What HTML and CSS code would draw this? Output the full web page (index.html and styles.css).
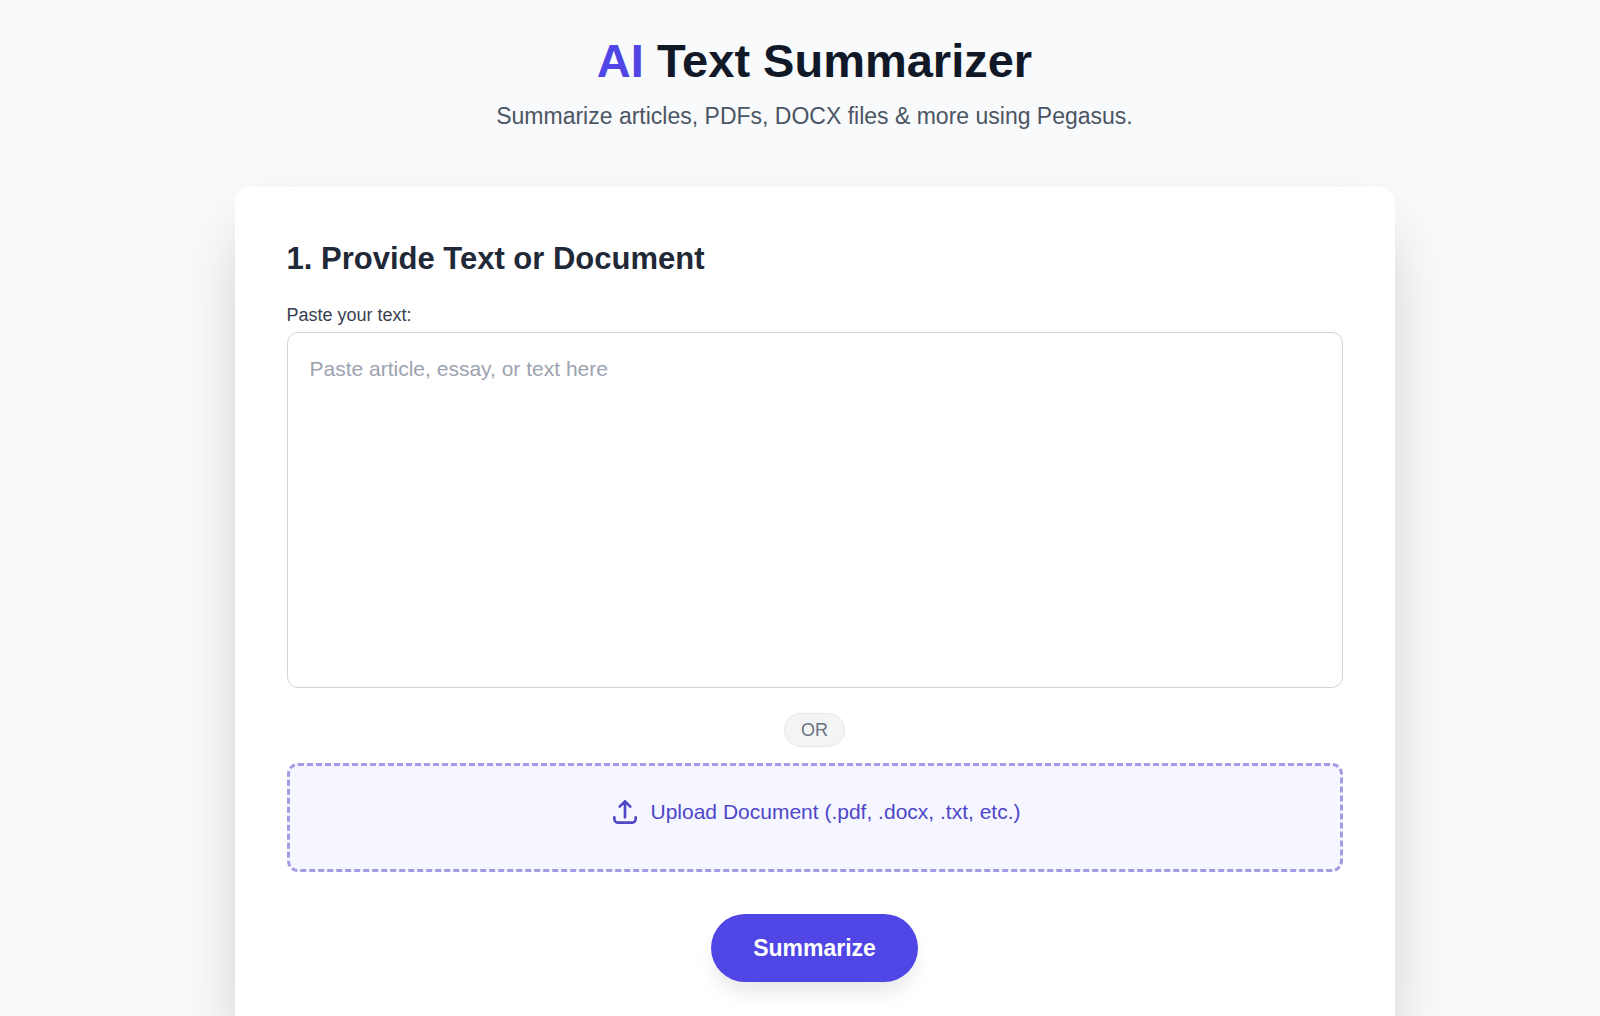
FILE: index.html
```html
<!DOCTYPE html>
<html lang="en">
<head>
    <meta charset="UTF-8">
    <meta name="viewport" content="width=device-width, initial-scale=1.0">
    <title>AI Text Summarizer</title>
    <link rel="stylesheet" href="styles.css">
</head>
<body>
    <div class="container">
        <header class="header">
            <h1><span class="accent">AI</span> Text Summarizer</h1>
            <p>Summarize articles, PDFs, DOCX files &amp; more using Pegasus.</p>
        </header>

        <main class="card">
            <h2>1. Provide Text or Document</h2>

            <form class="summary-form">
                <label class="text-label" for="text-input">Paste your text:</label>
                <textarea id="text-input" name="text" placeholder="Paste article, essay, or text here"></textarea>

                <span class="or-pill">OR</span>

                <label class="upload-box" for="file-upload">
                    <svg class="upload-icon" viewBox="0 0 24 24" fill="none" stroke="currentColor" stroke-width="2" stroke-linecap="round" stroke-linejoin="round" aria-hidden="true">
                        <path d="M4 16v1a3 3 0 003 3h10a3 3 0 003-3v-1m-4-8l-4-4m0 0L8 8m4-4v12"/>
                    </svg>
                    <span>Upload Document (.pdf, .docx, .txt, etc.)</span>
                    <input type="file" id="file-upload" name="file" class="file-input" accept=".pdf,.docx,.txt">
                </label>

                <button type="submit" class="summarize-btn">Summarize</button>
            </form>
        </main>
    </div>
</body>
</html>
```

FILE: styles.css
```css
* {
    box-sizing: border-box;
    margin: 0;
}

body {
    background: #f9fafc;
    color: #1f2937;
    font-family: "Liberation Sans", Arial, sans-serif;
    overflow-x: hidden;
    padding: 33px 0 0 29px;
}

.container {
    max-width: 1160px;
    margin: 0 auto;
}

.header {
    text-align: center;
    margin-bottom: 54px;
}

.header h1 {
    color: #111827;
    font-size: 47px;
    line-height: 56px;
}

.header .accent {
    color: #4f46e5;
}

.header p {
    color: #4b5563;
    font-size: 23px;
    line-height: 34px;
    margin-top: 10px;
}

.card {
    background: #fff;
    border-radius: 16px;
    padding: 52px;
    box-shadow: 0 33px 66px -16px rgba(0, 0, 0, 0.25);
}

.card h2 {
    font-size: 31px;
    line-height: 40px;
    margin-bottom: 24px;
}

.summary-form {
    display: flex;
    flex-direction: column;
    align-items: center;
}

.text-label {
    align-self: flex-start;
    color: #374151;
    font-size: 18px;
    line-height: 24px;
    margin-bottom: 5px;
}

textarea {
    display: block;
    width: 100%;
    height: 356px;
    padding: 22px;
    border: 1px solid #d1d5db;
    border-radius: 11px;
    background: #fff;
    font-family: inherit;
    font-size: 21px;
    line-height: 28px;
    resize: none;
}

textarea::placeholder {
    color: #9ca3af;
}

.or-pill {
    margin: 25px 0 16px;
    padding: 4px 16px;
    border: 1px solid #e5e7eb;
    border-radius: 17px;
    background: #f3f4f6;
    color: #6b7280;
    font-size: 18px;
    line-height: 24px;
}

.upload-box {
    position: relative;
    display: flex;
    justify-content: center;
    align-items: flex-start;
    gap: 10px;
    width: 100%;
    height: 109px;
    padding: 30px;
    border: 3px dashed #a39be3;
    border-radius: 11px;
    background: #f5f6ff;
    color: #4f46c8;
    font-size: 21px;
    line-height: 32px;
    cursor: pointer;
}

.upload-icon {
    width: 32px;
    height: 32px;
}

.file-input {
    position: absolute;
    width: 1px;
    height: 1px;
    opacity: 0;
}

.summarize-btn {
    margin-top: 42px;
    padding: 18px 42px;
    border: none;
    border-radius: 34px;
    background: #4f46e5;
    color: #fff;
    font-family: inherit;
    font-size: 23px;
    font-weight: bold;
    line-height: 32px;
    box-shadow: 0 13px 20px -4px rgba(0, 0, 0, 0.1);
    cursor: pointer;
}
```
